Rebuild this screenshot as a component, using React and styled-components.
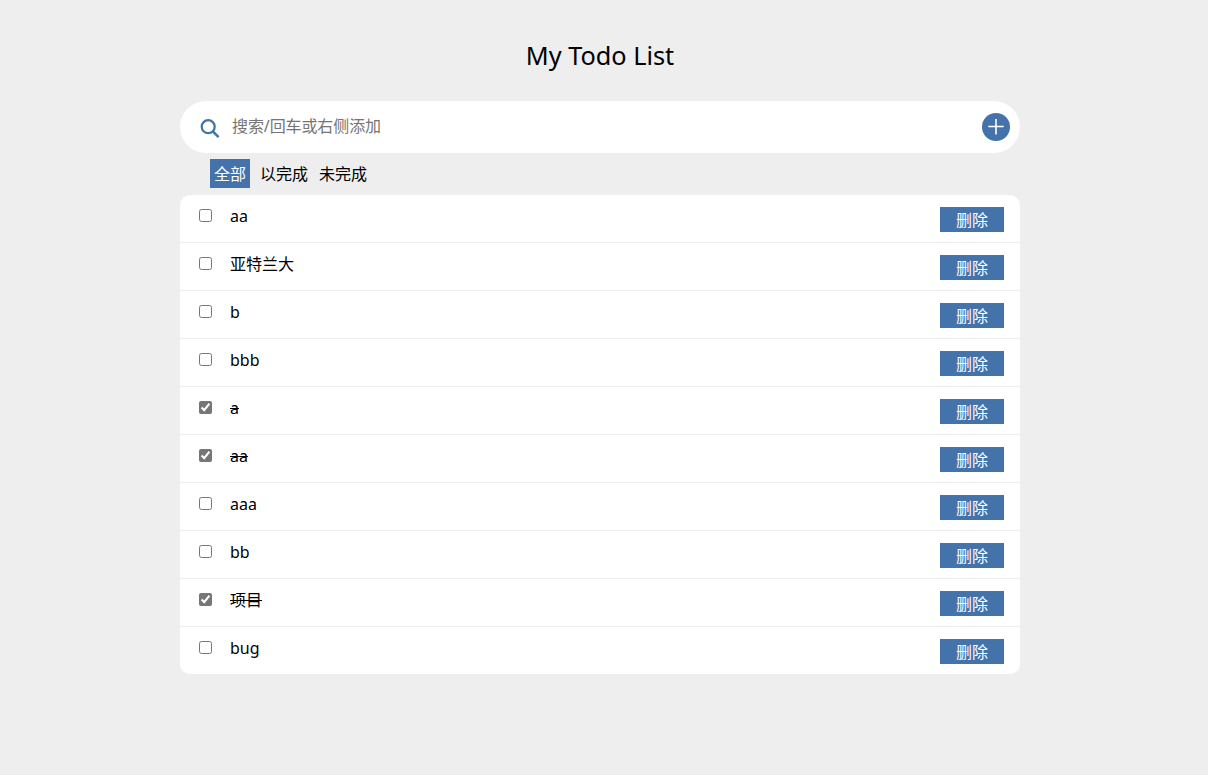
import React, { useState } from "react";
import styled, { createGlobalStyle } from "styled-components";

const BLUE = "#4472ab";

const GlobalStyle = createGlobalStyle`
  * { box-sizing: border-box; }
  html, body { margin: 0; padding: 0; background: #eee; }
  body, button, input {
    font-family: "Noto Sans", "Noto Sans CJK SC", sans-serif;
    font-size: 16px;
    color: #000;
  }
`;

const Page = styled.main`
  width: 1200px;
  min-height: 775px;
  padding-top: 32px;
`;

const Container = styled.div`
  width: 840px;
  margin: 0 auto;
`;

const Title = styled.h1`
  margin: 0 0 23px;
  height: 46px;
  line-height: 46px;
  font-size: 25.3px;
  font-weight: 400;
  text-align: center;
`;

const SearchBar = styled.div`
  display: flex;
  align-items: center;
  height: 52px;
  padding: 0 10px 0 20px;
  border-radius: 26px;
  background: #fff;
`;

const SearchInput = styled.input`
  flex: 1;
  height: 30px;
  margin: 0 0 2px 12px;
  padding: 0;
  border: 0;
  outline: 0;
  background: none;
  letter-spacing: -0.1px;
  &::placeholder { color: #757575; }
`;

const AddButton = styled.button`
  display: flex;
  width: 28px;
  height: 28px;
  padding: 0;
  border: 0;
  border-radius: 50%;
  background: ${BLUE};
`;

const Filters = styled.nav`
  display: flex;
  gap: 3px;
  height: 42px;
  padding: 6px 0 7px 30px;
`;

const Filter = styled.button`
  height: 29px;
  padding: 2px 4px 0;
  margin-right: ${(p) => (p.$active ? "3px" : "0")};
  border: 0;
  line-height: 27px;
  white-space: nowrap;
  color: ${(p) => (p.$active ? "#fff" : "#000")};
  background: ${(p) => (p.$active ? BLUE : "transparent")};
`;

const List = styled.ul`
  margin: 0;
  padding: 0;
  list-style: none;
  border-radius: 10px;
  overflow: hidden;
  background: #fff;
`;

const Row = styled.li`
  display: flex;
  align-items: flex-start;
  height: 48px;
  padding: 0 16px 0 19px;
  border-bottom: 1px solid #eee;
  &:last-child { height: 47px; border-bottom: 0; }
`;

const Check = styled.input`
  width: 13px;
  height: 13px;
  margin: 14px 18px 0 0;
  accent-color: #767676;
`;

const Label = styled.span`
  flex: 1;
  margin-top: 9px;
  line-height: 24px;
  text-decoration: ${(p) => (p.$done ? "line-through" : "none")};
`;

const DeleteButton = styled.button`
  width: 64px;
  height: 25px;
  margin-top: 12px;
  padding: 2px 0 0;
  border: 0;
  line-height: 23px;
  color: #fff;
  background: ${BLUE};
`;

const SearchGlyph = styled.svg`
  margin-top: 3px;
`;

const SearchIcon = () => (
  <SearchGlyph width="20" height="20" viewBox="0 0 20 20" fill="none" stroke={BLUE} strokeWidth="2.2">
    <circle cx="8.2" cy="7.7" r="6.5" />
    <path d="M12.8 12.3L18.6 18.1" strokeWidth="2.6" />
  </SearchGlyph>
);

const PlusIcon = () => (
  <svg width="28" height="28" viewBox="0 0 28 28" stroke="#fff" strokeWidth="1.6">
    <path d="M6.3 13.5H21.7M14 6V21.5" />
  </svg>
);

const initial = [
  ["aa", false],
  ["亚特兰大", false],
  ["b", false],
  ["bbb", false],
  ["a", true],
  ["aa", true],
  ["aaa", false],
  ["bb", false],
  ["项目", true],
  ["bug", false],
].map(([text, done], id) => ({ id, text, done }));

const filters = ["全部", "以完成", "未完成"];

export default function App() {
  const [todos, setTodos] = useState(initial);
  const [filter, setFilter] = useState(0);
  const [query, setQuery] = useState("");

  const add = () => {
    const text = query.trim();
    if (!text) return;
    setTodos([...todos, { id: Date.now(), text, done: false }]);
    setQuery("");
  };
  const toggle = (id) =>
    setTodos(todos.map((t) => (t.id === id ? { ...t, done: !t.done } : t)));
  const remove = (id) => setTodos(todos.filter((t) => t.id !== id));

  const visible = todos.filter(
    (t) => (filter === 0 || t.done === (filter === 1)) && t.text.includes(query.trim())
  );

  return (
    <Page>
      <GlobalStyle />
      <Container>
        <Title>My Todo List</Title>
        <SearchBar>
          <SearchIcon />
          <SearchInput
            value={query}
            placeholder="搜索/回车或右侧添加"
            onChange={(e) => setQuery(e.target.value)}
            onKeyDown={(e) => e.key === "Enter" && add()}
          />
          <AddButton onClick={add} aria-label="添加">
            <PlusIcon />
          </AddButton>
        </SearchBar>
        <Filters>
          {filters.map((name, i) => (
            <Filter key={name} $active={filter === i} onClick={() => setFilter(i)}>
              {name}
            </Filter>
          ))}
        </Filters>
        <List>
          {visible.map((t) => (
            <Row key={t.id}>
              <Check type="checkbox" checked={t.done} onChange={() => toggle(t.id)} />
              <Label $done={t.done}>{t.text}</Label>
              <DeleteButton onClick={() => remove(t.id)}>删除</DeleteButton>
            </Row>
          ))}
        </List>
      </Container>
    </Page>
  );
}
